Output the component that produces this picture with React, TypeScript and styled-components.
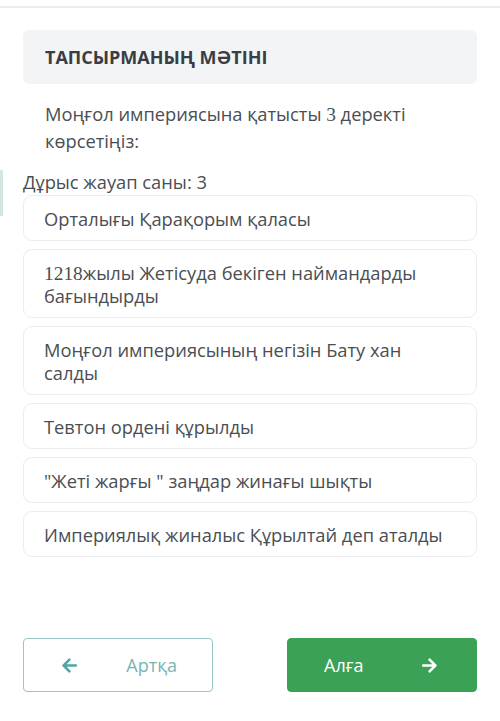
import React from "react"
import styled, { createGlobalStyle } from "styled-components"
import { FaArrowLeft, FaArrowRight } from "react-icons/fa"

const GlobalStyle = createGlobalStyle`
  html, body {
    margin: 0;
    padding: 0;
    background: #ffffff;
  }
  body {
    font-family: "Open Sans", "Noto Sans", sans-serif;
    color: #474b4f;
  }
`

const Page = styled.div`
  width: 500px;
  height: 721px;
  display: flex;
  flex-direction: column;
  background: #ffffff;
  overflow: hidden;
`

const TopRule = styled.div`
  height: 2px;
  margin-top: 6px;
  background: #ededef;
`

const Content = styled.div`
  position: relative;
  display: flex;
  flex-direction: column;
  padding: 22px 23px 0 23px;
`

const SideMark = styled.div`
  position: absolute;
  left: 0;
  top: 162px;
  width: 3px;
  height: 46px;
  background: #d3e6df;
`

const Header = styled.div`
  height: 54px;
  display: flex;
  align-items: center;
  padding: 0 22px;
  background: #f3f4f6;
  border-radius: 6px;
  font-size: 18px;
  font-weight: 700;
  color: #393e44;
`

const Question = styled.p`
  margin: 16px 0 0 0;
  padding: 0 22px;
  font-size: 18.3px;
  line-height: 27px;
  color: #4a4e52;
`

const Serif = styled.span`
  font-family: "Liberation Serif", "DejaVu Serif", serif;
  font-size: 1.06em;
  line-height: 1;
`

const Count = styled.div`
  margin-top: 17px;
  font-size: 18.3px;
  line-height: 22px;
  color: #4a4e52;
`

const Options = styled.div`
  display: flex;
  flex-direction: column;
  gap: 8px;
  margin-top: 2px;
`

const Option = styled.div`
  padding: 11px 20px 10px 20px;
  border: 1px solid #ececee;
  border-radius: 9px;
  background: #ffffff;
  font-size: 18.3px;
  line-height: 23px;
  color: #4a4e52;
`

const Footer = styled.div`
  display: flex;
  justify-content: space-between;
  margin-top: auto;
  padding: 0 23px 29px 23px;
`

const NavButton = styled.button<{ $primary?: boolean }>`
  width: 190px;
  height: 54px;
  box-sizing: border-box;
  display: flex;
  align-items: center;
  justify-content: space-between;
  padding: ${(p) => (p.$primary ? "0 38px 0 36px" : "0 35px 0 37px")};
  border-radius: 4px;
  border: 1px solid ${(p) => (p.$primary ? "#3aa157" : "#96c6c6")};
  background: ${(p) => (p.$primary ? "#3aa157" : "#ffffff")};
  color: ${(p) => (p.$primary ? "#ffffff" : "#78b5b5")};
  font-family: "Open Sans", "Noto Sans", sans-serif;
  font-size: 18px;
  cursor: pointer;

  svg {
    width: 17px;
    height: 17px;
    color: ${(p) => (p.$primary ? "#ffffff" : "#4fa7a5")};
  }
`

const options: React.ReactNode[] = [
  "Орталығы Қарақорым қаласы",
  <>
    <Serif>1218</Serif>жылы Жетісуда бекіген наймандарды бағындырды
  </>,
  "Моңғол империясының негізін Бату хан салды",
  "Тевтон ордені құрылды",
  "\"Жеті жарғы \" заңдар жинағы шықты",
  "Империялық жиналыс Құрылтай деп аталды",
]

export default function App() {
  return (
    <Page>
      <GlobalStyle />
      <TopRule />
      <Content>
        <SideMark />
        <Header>ТАПСЫРМАНЫҢ МӘТІНІ</Header>
        <Question>
          Моңғол империясына қатысты <Serif>3</Serif> деректі көрсетіңіз:
        </Question>
        <Count>Дұрыс жауап саны: 3</Count>
        <Options>
          {options.map((o, i) => (
            <Option key={i}>{o}</Option>
          ))}
        </Options>
      </Content>
      <Footer>
        <NavButton>
          <FaArrowLeft />
          <span>Артқа</span>
        </NavButton>
        <NavButton $primary>
          <span>Алға</span>
          <FaArrowRight />
        </NavButton>
      </Footer>
    </Page>
  )
}
